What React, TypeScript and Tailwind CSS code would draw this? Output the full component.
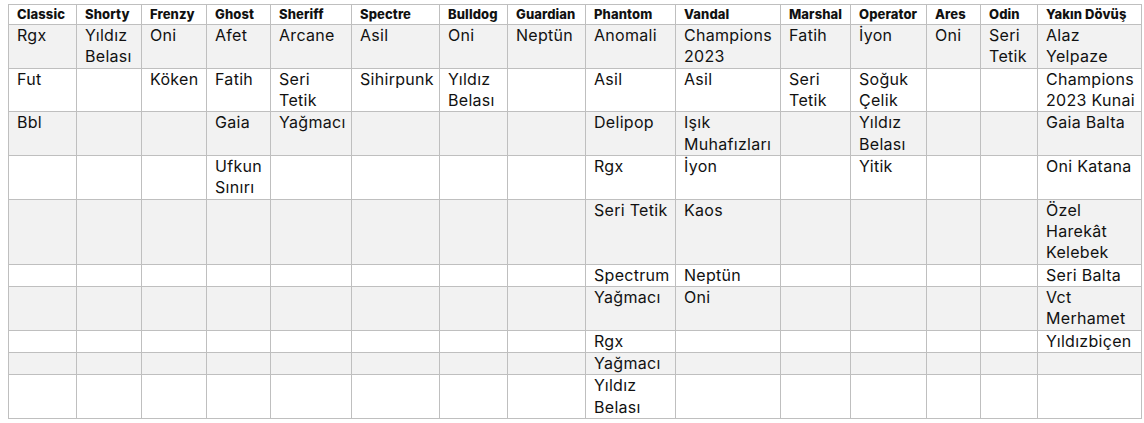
import React from 'react';

const COLS = [
  { name: 'Classic', w: 68 },
  { name: 'Shorty', w: 65 },
  { name: 'Frenzy', w: 65 },
  { name: 'Ghost', w: 64 },
  { name: 'Sheriff', w: 81 },
  { name: 'Spectre', w: 88 },
  { name: 'Bulldog', w: 68 },
  { name: 'Guardian', w: 78 },
  { name: 'Phantom', w: 90 },
  { name: 'Vandal', w: 105 },
  { name: 'Marshal', w: 70 },
  { name: 'Operator', w: 76 },
  { name: 'Ares', w: 54 },
  { name: 'Odin', w: 57 },
  { name: 'Yakın Dövüş', w: 104 },
];

// each cell is a list of lines, [] = empty cell
const ROWS: string[][][] = [
  [['Rgx'], ['Yıldız', 'Belası'], ['Oni'], ['Afet'], ['Arcane'], ['Asil'], ['Oni'], ['Neptün'], ['Anomali'], ['Champions', '2023'], ['Fatih'], ['İyon'], ['Oni'], ['Seri', 'Tetik'], ['Alaz', 'Yelpaze']],
  [['Fut'], [], ['Köken'], ['Fatih'], ['Seri', 'Tetik'], ['Sihirpunk'], ['Yıldız', 'Belası'], [], ['Asil'], ['Asil'], ['Seri', 'Tetik'], ['Soğuk', 'Çelik'], [], [], ['Champions', '2023 Kunai']],
  [['Bbl'], [], [], ['Gaia'], ['Yağmacı'], [], [], [], ['Delipop'], ['Işık', 'Muhafızları'], [], ['Yıldız', 'Belası'], [], [], ['Gaia Balta']],
  [[], [], [], ['Ufkun', 'Sınırı'], [], [], [], [], ['Rgx'], ['İyon'], [], ['Yitik'], [], [], ['Oni Katana']],
  [[], [], [], [], [], [], [], [], ['Seri Tetik'], ['Kaos'], [], [], [], [], ['Özel', 'Harekât', 'Kelebek']],
  [[], [], [], [], [], [], [], [], ['Spectrum'], ['Neptün'], [], [], [], [], ['Seri Balta']],
  [[], [], [], [], [], [], [], [], ['Yağmacı'], ['Oni'], [], [], [], [], ['Vct', 'Merhamet']],
  [[], [], [], [], [], [], [], [], ['Rgx'], [], [], [], [], [], ['Yıldızbiçen']],
  [[], [], [], [], [], [], [], [], ['Yağmacı'], [], [], [], [], [], []],
  [[], [], [], [], [], [], [], [], ['Yıldız', 'Belası'], [], [], [], [], [], []],
];

export default function App() {
  return (
    <div className="w-[1144px] h-[423px] bg-white pt-1 pl-2 font-['Inter',sans-serif] text-[#111]">
      <table className="table-fixed border-collapse border border-[#bfbfbf] w-[1133px]">
        <colgroup>
          {COLS.map(c => (
            <col key={c.name} style={{ width: c.w }} />
          ))}
        </colgroup>
        <thead>
          <tr className="h-[20px]">
            {COLS.map(c => (
              <th key={c.name} className="border border-[#bfbfbf] px-2 py-0 text-left align-middle text-[13px] font-extrabold leading-[19px] tracking-[0.1px] whitespace-nowrap">
                {c.name}
              </th>
            ))}
          </tr>
        </thead>
        <tbody>
          {ROWS.map((row, ri) => (
            <tr key={ri} className={ri % 2 === 0 ? 'bg-[#f2f2f2]' : 'bg-white'}>
              {row.map((cell, ci) => (
                <td key={ci} className="border border-[#bfbfbf] px-2 py-0 align-top text-[16px] leading-[21.33px] tracking-[0.3px] whitespace-nowrap">
                  {cell.map((line, li) => (
                    <div key={li}>{line}</div>
                  ))}
                </td>
              ))}
            </tr>
          ))}
        </tbody>
      </table>
    </div>
  );
}
